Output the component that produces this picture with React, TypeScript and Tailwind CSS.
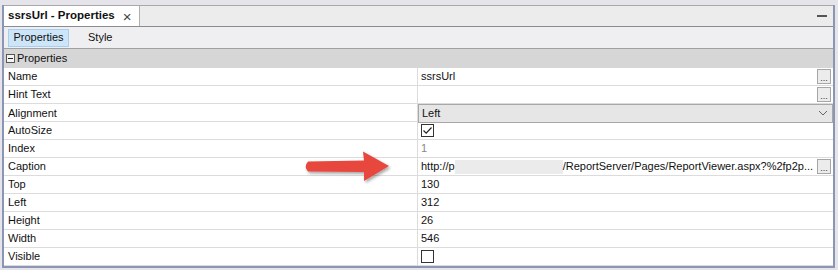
import { ReactNode } from "react";

const font = { fontFamily: '"Liberation Sans", Arial, sans-serif' };

function DotsButton() {
  return (
    <div className="ml-auto mr-[2px] flex h-[15px] w-[14px] items-end justify-center border border-[#a6a6a6] bg-[#ececec] pb-[2px] text-[9px] leading-[6px] text-[#333]">
      ...
    </div>
  );
}

function Check({ checked }: { checked?: boolean }) {
  return (
    <div className="flex h-[13px] w-[13px] items-center justify-center border border-[#333] bg-white">
      {checked && (
        <svg width="11" height="11" viewBox="0 0 11 11">
          <path d="M1.5 5.5 L4.2 8.2 L9.5 2.5" fill="none" stroke="#222" strokeWidth="1.2" />
        </svg>
      )}
    </div>
  );
}

function Row({ label, children, cls = "" }: { label: string; children?: ReactNode; cls?: string }) {
  return (
    <div className="grid h-[18px] grid-cols-[414px_1fr] border-b border-[#dcdcdc] text-[11px] text-[#111]">
      <div className="flex items-center border-r border-[#dcdcdc] pl-[4px]">{label}</div>
      <div className={"flex items-center pl-[3px] " + cls}>{children}</div>
    </div>
  );
}

function Arrow() {
  return (
    <svg className="absolute left-[302px] top-[150px]" width="92" height="34" viewBox="0 0 92 34">
      <defs>
        <filter id="sh" x="-20%" y="-30%" width="140%" height="160%">
          <feDropShadow dx="1.5" dy="2" stdDeviation="1.5" floodColor="#000" floodOpacity="0.35" />
        </filter>
      </defs>
      <path
        d="M6 11.5 L62 10.5 L61 1.5 L87 16 L62 31 L62 22 L6 21.5 Q1.5 16.5 6 11.5 Z"
        fill="#e8463d"
        filter="url(#sh)"
      />
    </svg>
  );
}

export default function App() {
  return (
    <div className="relative h-[270px] w-[838px] bg-[#e4e4ea] pt-[5px] pl-[2px]" style={font}>
      <div className="w-[833px] border-x-2 border-b-2 border-[#8a96b3] bg-white">
        {/* tab header */}
        <div className="flex h-[22px] border-y border-t-[#a8a8a8] border-b-[#8c8c8c] bg-[#ececec]">
          <div className="flex w-[136px] items-center border-r border-[#b0b0b0] bg-white pl-[4px] text-[11.5px] font-bold text-[#111]">
            ssrsUrl - Properties
            <span className="ml-[8px] text-[15px] leading-none font-normal text-[#444]">×</span>
          </div>
          <div className="ml-auto mr-[6px] flex items-center">
            <div className="h-[2px] w-[10px] bg-[#555]" />
          </div>
        </div>
        {/* toolbar */}
        <div className="flex h-[22px] items-center border-b border-[#a0a0a0] bg-[#efeff1] pl-[4px] text-[11px] text-[#111]">
          <div className="flex h-[18px] w-[61px] items-center justify-center border border-[#a8cdee] bg-[#cde5f8]">
            Properties
          </div>
          <div className="ml-[19px]">Style</div>
        </div>
        {/* section header */}
        <div className="flex h-[19px] items-center bg-[#d6d6d6] pl-[2px] text-[11px] text-[#111]">
          <div className="mr-[2px] flex h-[9px] w-[9px] items-center justify-center border border-[#555] bg-[#f4f4f4]">
            <div className="h-[1px] w-[5px] bg-[#222]" />
          </div>
          Properties
        </div>
        <Row label="Name">
          ssrsUrl
          <DotsButton />
        </Row>
        <Row label="Hint Text">
          <DotsButton />
        </Row>
        <Row label="Alignment" cls="border border-[#a8a8a8] bg-[#e6e6e6]">
          Left
          <svg className="ml-auto mr-[4px]" width="10" height="6" viewBox="0 0 10 6">
            <path d="M1 1 L5 5 L9 1" fill="none" stroke="#666" strokeWidth="1" />
          </svg>
        </Row>
        <Row label="AutoSize">
          <Check checked />
        </Row>
        <Row label="Index" cls="text-[#888]">
          1
        </Row>
        <Row label="Caption">
          <span>http://p</span>
          <div className="h-[14px] w-[108px] bg-[#ebebeb]" />
          <span className="whitespace-nowrap">/ReportServer/Pages/ReportViewer.aspx?%2fp2p...</span>
          <DotsButton />
        </Row>
        <Row label="Top">130</Row>
        <Row label="Left">312</Row>
        <Row label="Height">26</Row>
        <Row label="Width">546</Row>
        <Row label="Visible">
          <Check />
        </Row>
      </div>
      <Arrow />
    </div>
  );
}
